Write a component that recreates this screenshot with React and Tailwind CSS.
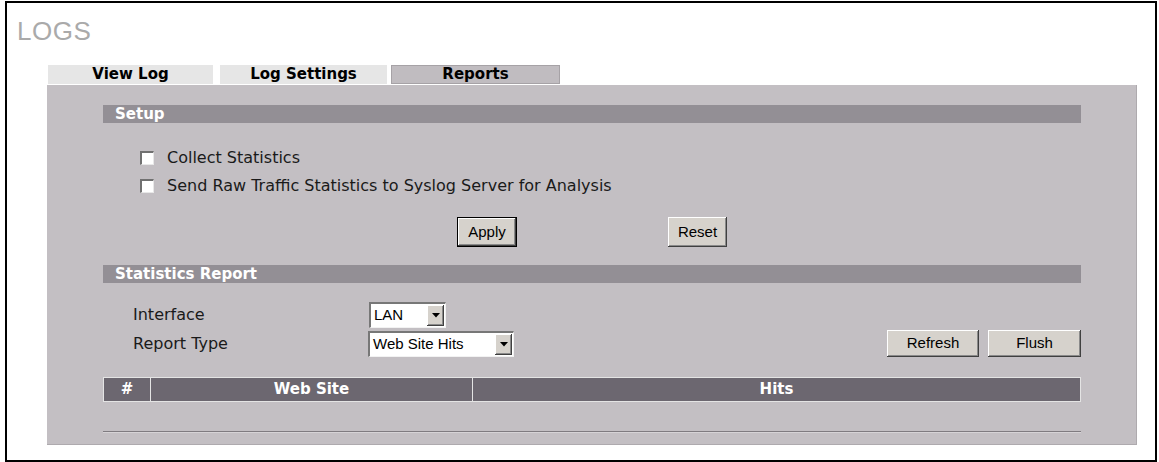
import React from "react";

const verdana = { fontFamily: '"DejaVu Sans", Verdana, sans-serif' };

const Checkbox = () => (
  <div className="w-[14px] h-[14px] shrink-0 bg-white border-t-2 border-l-2 border-t-[#707070] border-l-[#707070] border-b border-r border-b-[#e8e8e8] border-r-[#e8e8e8]" />
);

const WinButton = ({ label, size, isDefault }) => (
  <button
    className={`${size} bg-[#d6d2cc] text-black text-[15px] font-['Liberation_Sans',Arial,sans-serif] flex items-center justify-center ${
      isDefault
        ? "border border-black shadow-[inset_-1px_-1px_0_#404040,inset_1px_1px_0_#ffffff,inset_-2px_-2px_0_#8a8a8a]"
        : "shadow-[inset_-1px_-1px_0_#404040,inset_1px_1px_0_#ffffff,inset_-2px_-2px_0_#8a8a8a]"
    }`}
  >
    {label}
  </button>
);

const Select = ({ value, width }) => (
  <div
    className={`${width} h-[26px] bg-white flex items-stretch border-t-2 border-l-2 border-t-[#777] border-l-[#777] border-b border-r border-b-[#f2f2f2] border-r-[#f2f2f2]`}
  >
    <span className="flex-1 pl-[3px] flex items-center text-[15px] text-black font-['Liberation_Sans',Arial,sans-serif]">
      {value}
    </span>
    <span className="w-[17px] my-[1px] mr-[1px] bg-[#d6d2cc] flex items-center justify-center shadow-[inset_-1px_-1px_0_#404040,inset_1px_1px_0_#ffffff,inset_-2px_-2px_0_#8a8a8a]">
      <svg width="8" height="5" viewBox="0 0 8 5">
        <path d="M0 0h8L4 4.5z" fill="#000" />
      </svg>
    </span>
  </div>
);

const SectionBar = ({ title }) => (
  <div className="h-[18px] bg-[#938f95] flex items-center pl-[12px]">
    <span className="text-white font-bold text-[15px] leading-none" style={verdana}>
      {title}
    </span>
  </div>
);

export default function App() {
  return (
    <div className="w-[1159px] h-[462px] bg-white overflow-hidden">
      <div className="ml-[5px] mt-[1px] w-[1152px] h-[461px] border-2 border-black">
        {/* Title */}
        <div className="pt-[15px] pl-[10px] h-[44px] text-[26px] leading-[26px] tracking-[0.5px] text-[#aaaaaa] font-['Liberation_Sans',Arial,sans-serif]">
          LOGS
        </div>

        {/* Tabs */}
        <div className="mt-[18px] ml-[41px] flex h-[19px]" style={verdana}>
          <div className="w-[165px] bg-[#e6e6e6] flex items-center justify-center text-[15px] font-bold text-black">
            View Log
          </div>
          <div className="ml-[7px] w-[167px] bg-[#e6e6e6] flex items-center justify-center text-[15px] font-bold text-black">
            Log Settings
          </div>
          <div className="ml-[4px] w-[169px] bg-[#c0bcc0] border border-[#a6a2a6] flex items-center justify-center text-[15px] font-bold text-black">
            Reports
          </div>
        </div>

        {/* Panel */}
        <div className="mt-[1px] ml-[40px] w-[1090px] h-[360px] bg-[#c3bfc3] border-r border-b border-[#aeaaae] pt-[20px] pl-[56px]" style={verdana}>
          <div className="w-[978px] flex flex-col">
            <SectionBar title="Setup" />

            <div className="mt-[21px] flex flex-col text-[16px] text-[#1a1a1a]">
              <label className="h-[28px] flex items-center pl-[37px] gap-[13px]">
                <Checkbox />
                <span>Collect Statistics</span>
              </label>
              <label className="h-[28px] flex items-center pl-[37px] gap-[13px]">
                <Checkbox />
                <span>Send Raw Traffic Statistics to Syslog Server for Analysis</span>
              </label>
            </div>

            <div className="mt-[17px] flex">
              <div className="ml-[354px]">
                <WinButton label="Apply" size="w-[60px] h-[30px]" isDefault />
              </div>
              <div className="ml-[151px]">
                <WinButton label="Reset" size="w-[59px] h-[30px]" />
              </div>
            </div>

            <div className="mt-[18px]">
              <SectionBar title="Statistics Report" />
            </div>

            <div className="mt-[19px] flex items-center text-[16px] text-[#1a1a1a]">
              <span className="w-[266px] pl-[30px]">Interface</span>
              <Select value="LAN" width="w-[77px]" />
            </div>
            <div className="mt-[2px] flex items-center text-[16px] text-[#1a1a1a]">
              <span className="w-[265px] pl-[30px]">Report Type</span>
              <Select value="Web Site Hits" width="w-[146px]" />
              <div className="ml-auto flex gap-[9px]">
                <WinButton label="Refresh" size="w-[92px] h-[27px]" />
                <WinButton label="Flush" size="w-[93px] h-[27px]" />
              </div>
            </div>

            {/* Table header */}
            <div className="mt-[20px] h-[25px] flex border border-[#e4e4e4] bg-[#6c6770] text-white font-bold text-[15px]">
              <div className="w-[47px] flex items-center justify-center border-r border-[#e4e4e4]">#</div>
              <div className="w-[322px] flex items-center justify-center border-r border-[#e4e4e4]">Web Site</div>
              <div className="flex-1 flex items-center justify-center">Hits</div>
            </div>

            <div className="mt-[29px] h-[1px] bg-[#7f7b80]" />
            <div className="h-[1px] bg-[#d6d3d6]" />
          </div>
        </div>
      </div>
    </div>
  );
}
